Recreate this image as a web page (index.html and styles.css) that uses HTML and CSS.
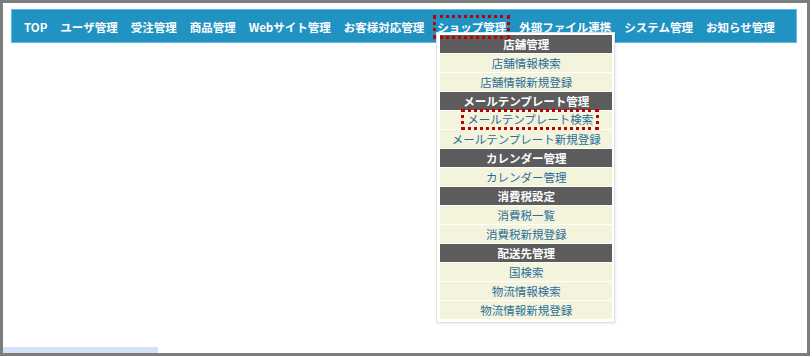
FILE: index.html
```html
<!DOCTYPE html>
<html lang="ja">
<head>
<meta charset="utf-8">
<title>ショップ管理</title>
<link rel="stylesheet" href="styles.css">
</head>
<body>
<div class="frame">
  <nav class="menubar">
    <ul class="menu">
      <li class="menu-item"><span class="menu-link">TOP</span></li>
      <li class="menu-item"><span class="menu-link">ユーザ管理</span></li>
      <li class="menu-item"><span class="menu-link">受注管理</span></li>
      <li class="menu-item"><span class="menu-link">商品管理</span></li>
      <li class="menu-item"><span class="menu-link">Webサイト管理</span></li>
      <li class="menu-item"><span class="menu-link">お客様対応管理</span></li>
      <li class="menu-item menu-item-open">
        <span class="menu-link marked">ショップ管理</span>
        <ul class="dropdown">
          <li class="dd-head">店舗管理</li>
          <li class="dd-row">店舗情報検索</li>
          <li class="dd-row">店舗情報新規登録</li>
          <li class="dd-head">メールテンプレート管理</li>
          <li class="dd-row"><span class="marked-row">メールテンプレート検索</span></li>
          <li class="dd-row">メールテンプレート新規登録</li>
          <li class="dd-head">カレンダー管理</li>
          <li class="dd-row">カレンダー管理</li>
          <li class="dd-head">消費税設定</li>
          <li class="dd-row">消費税一覧</li>
          <li class="dd-row">消費税新規登録</li>
          <li class="dd-head">配送先管理</li>
          <li class="dd-row">国検索</li>
          <li class="dd-row">物流情報検索</li>
          <li class="dd-row">物流情報新規登録</li>
        </ul>
      </li>
      <li class="menu-item"><span class="menu-link">外部ファイル連携</span></li>
      <li class="menu-item"><span class="menu-link">システム管理</span></li>
      <li class="menu-item"><span class="menu-link">お知らせ管理</span></li>
    </ul>
  </nav>
  <div class="statusbar"></div>
</div>
</body>
</html>
```
FILE: styles.css
```css
html, body {
  margin: 0;
  padding: 0;
  background: #ffffff;
}

body {
  font-family: "Noto Sans CJK JP", "Noto Sans", sans-serif;
}

.frame {
  position: relative;
  box-sizing: border-box;
  width: 810px;
  height: 356px;
  border: 3px solid #7d7d7d;
  padding: 6px 10px 0 8px;
}

.menubar {
  box-sizing: border-box;
  height: 34px;
  background: #2193c3;
  border: 1px solid #63b9df;
}

.menu {
  list-style: none;
  margin: 0;
  padding: 0 0 0 12px;
  height: 100%;
  display: flex;
  align-items: stretch;
  gap: 13px;
}

.menu-item {
  position: relative;
  display: flex;
  align-items: center;
}

.menu-link {
  color: #ffffff;
  font-weight: bold;
  font-size: 11.5px;
  line-height: 16px;
  white-space: nowrap;
  margin-top: 1px;
}

.marked {
  position: relative;
  z-index: 3;
  outline: 3px dotted #c00000;
  outline-offset: 1px;
}

.dropdown {
  position: absolute;
  z-index: 2;
  left: -1px;
  top: 22px;
  width: 172px;
  list-style: none;
  margin: 0;
  padding: 2px 2px 3px 3px;
  background: #ffffff;
  border: 1px solid #e2e2e2;
  box-shadow: 1px 1px 2px rgba(0, 0, 0, 0.08);
  display: flex;
  flex-direction: column;
  gap: 1px;
}

.dd-head,
.dd-row {
  height: 18px;
  line-height: 18px;
  text-align: center;
  font-size: 11.5px;
  white-space: nowrap;
}

.dd-head {
  background: #5c5c5c;
  color: #ffffff;
  font-weight: bold;
}

.dd-row {
  background: #f4f4dd;
  color: #2a6e98;
}

.marked-row {
  display: inline-block;
  vertical-align: top;
  margin-top: 1px;
  margin-left: 8px;
  line-height: 15px;
  padding: 0 3px;
  outline: 3px dotted #c00000;
  outline-offset: 0;
}

.statusbar {
  position: absolute;
  left: 0;
  bottom: 0;
  width: 155px;
  height: 6px;
  background: #d2e2fb;
}
```
